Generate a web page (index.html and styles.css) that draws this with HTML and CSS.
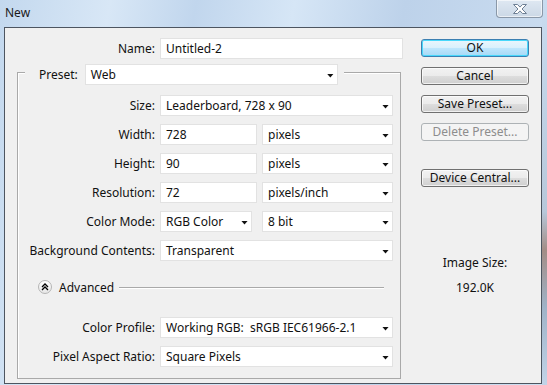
FILE: index.html
```html
<!DOCTYPE html>
<html lang="en">
<head>
    <meta charset="UTF-8">
    <title>New</title>
    <link rel="stylesheet" href="styles.css">
</head>
<body>
    <div class="window">
        <div class="titlebar">
            <span class="title">New</span>
            <div class="close-btn">
                <svg width="16" height="12" viewBox="0 0 16 12">
                    <path d="M1.5 1.5h4l2.5 2.6 2.5-2.6h4l-4.5 4.5 4.5 4.5h-4l-2.5-2.6-2.5 2.6h-4l4.5-4.5z" fill="#fff" stroke="#6e7f94" stroke-width="1" stroke-linejoin="round"/>
                </svg>
            </div>
        </div>

        <div class="client">
            <div class="form">
                <div class="row top-row">
                    <span class="lbl lbl-top">Name:</span>
                    <div class="field text name">Untitled-2</div>
                </div>

                <div class="group">
                    <div class="legend">
                        <span class="legend-lbl">Preset:</span>
                        <div class="field select preset">Web</div>
                    </div>

                    <div class="row first">
                        <span class="lbl">Size:</span>
                        <div class="field select full">Leaderboard, 728 x 90</div>
                    </div>
                    <div class="row">
                        <span class="lbl">Width:</span>
                        <div class="field text num">728</div>
                        <div class="field select unit">pixels</div>
                    </div>
                    <div class="row">
                        <span class="lbl">Height:</span>
                        <div class="field text num">90</div>
                        <div class="field select unit">pixels</div>
                    </div>
                    <div class="row">
                        <span class="lbl">Resolution:</span>
                        <div class="field text num">72</div>
                        <div class="field select unit">pixels/inch</div>
                    </div>
                    <div class="row">
                        <span class="lbl">Color Mode:</span>
                        <div class="field select mode">RGB Color</div>
                        <div class="field select unit">8 bit</div>
                    </div>
                    <div class="row">
                        <span class="lbl">Background Contents:</span>
                        <div class="field select full">Transparent</div>
                    </div>

                    <div class="advanced">
                        <span class="adv-icon">
                            <svg width="8" height="8" viewBox="0 0 8 8">
                                <path d="M1 4l3-3 3 3M1 7l3-3 3 3" fill="none" stroke="#000" stroke-width="1.3"/>
                            </svg>
                        </span>
                        <span class="adv-text">Advanced</span>
                        <span class="adv-line"></span>
                    </div>

                    <div class="row after-adv">
                        <span class="lbl">Color Profile:</span>
                        <div class="field select full">Working RGB:&nbsp; sRGB IEC61966-2.1</div>
                    </div>
                    <div class="row">
                        <span class="lbl">Pixel Aspect Ratio:</span>
                        <div class="field select full">Square Pixels</div>
                    </div>
                </div>
            </div>

            <div class="side">
                <div class="btn default">OK</div>
                <div class="btn">Cancel</div>
                <div class="btn">Save Preset...</div>
                <div class="btn disabled">Delete Preset...</div>
                <div class="btn device">Device Central...</div>

                <div class="size-info">
                    <div class="size-label">Image Size:</div>
                    <div class="size-value">192.0K</div>
                </div>
            </div>
        </div>
    </div>
</body>
</html>
```

FILE: styles.css
```css
:root {
    --face: #f0f0f0;
    --field-border: #e2e2e2;
    --group-line: #a9a9a9;
    --text: #111;
}

* {
    margin: 0;
    padding: 0;
    box-sizing: border-box;
}

body {
    width: 547px;
    height: 385px;
    overflow: hidden;
    font-family: "Noto Sans", "Open Sans", sans-serif;
    font-size: 12px;
    color: var(--text);
    background:
        linear-gradient(to bottom, #c9dcf0 0%, #b7c8da 55%, #a38d86 65%, #9fb3c8 80%, #c2d4e8 100%) right / 5px 100% no-repeat,
        linear-gradient(100deg, #c3d8ee 0%, #d8e7f6 18%, #c1d6ed 32%, #d6e6f6 48%, #bdd2ea 66%, #cfe0f2 100%);
}

.window {
    height: 100%;
}

.titlebar {
    height: 27px;
    display: flex;
    justify-content: space-between;
    align-items: flex-start;
    padding-left: 5px;
}

.title {
    margin-top: 6px;
    line-height: 14px;
    color: #1a1a1a;
}

.close-btn {
    width: 47px;
    height: 18px;
    margin-right: 4px;
    border: 1px solid #8a98a8;
    border-top: none;
    border-radius: 0 0 4px 4px;
    background: linear-gradient(to bottom, #dfe8f2, #cbd8e6);
    box-shadow: inset 0 0 0 1px rgba(255, 255, 255, 0.6);
    display: flex;
    align-items: center;
    justify-content: center;
}

.client {
    margin-left: 4px;
    width: 538px;
    height: 357px;
    border: 1px solid #4d5560;
    background: var(--face);
    display: flex;
}

.form {
    width: 400px;
    padding-top: 10px;
}

.row {
    display: flex;
    align-items: center;
    height: 21px;
    margin-top: 8px;
}

.top-row {
    margin-top: 0;
}

.lbl {
    width: 137px;
    margin-right: 5px;
    text-align: right;
    white-space: nowrap;
}

.lbl-top {
    width: 150px;
}

.field {
    height: 21px;
    background: #fff;
    border: 1px solid var(--field-border);
    display: flex;
    align-items: center;
    padding-left: 5px;
    white-space: nowrap;
}

.select {
    justify-content: space-between;
    padding-right: 3px;
}

.select::after {
    content: "";
    width: 7px;
    height: 4px;
    margin-top: 2px;
    background: #111;
    clip-path: polygon(0 0, 100% 0, 50% 100%);
}

.name { width: 243px; }
.preset { width: 253px; }
.full { width: 233px; }
.num { width: 97px; margin-right: 5px; }
.mode { width: 92px; margin-right: 10px; }
.unit { width: 131px; }

.group {
    width: 384px;
    height: 307px;
    margin: 13px 0 0 12px;
    border: 1px solid var(--group-line);
    box-shadow: inset 1px 1px 0 #fff;
}

.legend {
    display: flex;
    width: fit-content;
    align-items: center;
    margin: -9px 0 0 7px;
    padding: 0 6px 0 14px;
    background: var(--face);
}

.legend-lbl {
    margin-right: 7px;
}

.row.first {
    margin-top: 10px;
}

.advanced {
    display: flex;
    align-items: center;
    height: 20px;
    margin-top: 16px;
    padding-left: 20px;
}

.adv-icon {
    width: 14px;
    height: 14px;
    border-radius: 50%;
    border: 1px solid #b5b5b5;
    background: linear-gradient(to bottom, #fff, #e6e6e6);
    display: flex;
    align-items: center;
    justify-content: center;
    margin-right: 7px;
}

.adv-text {
    margin-right: 5px;
}

.adv-line {
    flex: 1;
    height: 1px;
    margin-right: 16px;
    background: var(--group-line);
    box-shadow: 0 1px 0 #fff;
}

.row.after-adv {
    margin-top: 20px;
}

.side {
    flex: 1;
    padding: 11px 0 0 16px;
}

.btn {
    width: 108px;
    height: 18px;
    margin-bottom: 10px;
    border: 1px solid #707070;
    border-radius: 3px;
    background: linear-gradient(to bottom, #f2f2f2 0%, #ebebeb 50%, #dddddd 51%, #cfcfcf 100%);
    box-shadow: inset 0 0 0 1px rgba(255, 255, 255, 0.7);
    display: flex;
    align-items: center;
    justify-content: center;
    line-height: 1;
}

.btn.default {
    border-color: #3c7fb1;
    background: linear-gradient(to bottom, #eaf6fd 0%, #d9f0fc 50%, #bee6fd 51%, #a7d9f5 100%);
    box-shadow: inset 0 0 0 1px #48d8fb;
}

.btn.disabled {
    color: #8d8d8d;
    border-color: #adb2b5;
    background: #f4f4f4;
    box-shadow: none;
}

.btn.device {
    margin-top: 28px;
}

.size-info {
    width: 108px;
    margin-top: 68px;
    text-align: center;
    line-height: 15px;
}

.size-value {
    margin-top: 10px;
}
```
